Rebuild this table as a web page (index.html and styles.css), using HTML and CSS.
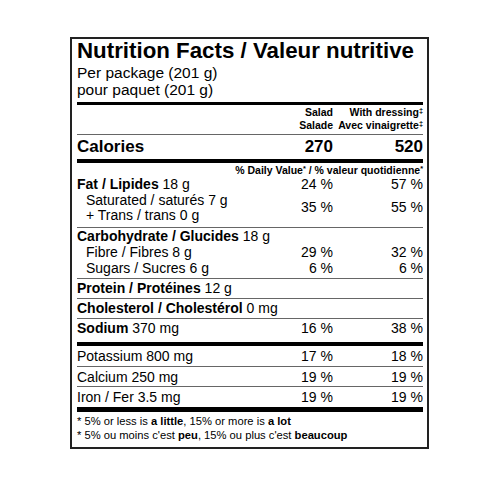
FILE: index.html
```html
<!DOCTYPE html>
<html lang="en">
<head>
    <meta charset="UTF-8">
    <meta name="viewport" content="width=device-width, initial-scale=1.0">
    <title>Nutrition Facts</title>

    <link rel="stylesheet" href="styles.css">
</head>
<body>
    <div class="facts">
        <h1 class="title">Nutrition Facts / Valeur nutritive</h1>
        <p class="serving">Per package (201 g)<br>pour paquet (201 g)</p>

        <div class="cols head">
            <span></span>
            <span class="num">Salad<br>Salade</span>
            <span class="num">With dressing<sup>‡</sup><br>Avec vinaigrette<sup>‡</sup></span>
        </div>

        <div class="cols calories">
            <span>Calories</span>
            <span class="num">270</span>
            <span class="num">520</span>
        </div>

        <p class="dv">% Daily Value<sup>*</sup> / % valeur quotidienne<sup>*</sup></p>

        <div class="group fat">
            <div class="cols">
                <span class="name"><b>Fat / Lipides</b> 18 g</span>
                <span class="num">24 %</span>
                <span class="num">57 %</span>
            </div>
            <div class="cols">
                <span class="name sub">Saturated / saturés 7 g<br>+ Trans / trans 0 g</span>
                <span class="num">35 %</span>
                <span class="num">55 %</span>
            </div>
        </div>

        <div class="group carbs">
            <div class="cols">
                <span class="name"><b>Carbohydrate / Glucides</b> 18 g</span>
                <span></span>
                <span></span>
            </div>
            <div class="cols">
                <span class="name sub">Fibre / Fibres 8 g</span>
                <span class="num">29 %</span>
                <span class="num">32 %</span>
            </div>
            <div class="cols">
                <span class="name sub">Sugars / Sucres 6 g</span>
                <span class="num">6 %</span>
                <span class="num">6 %</span>
            </div>
        </div>

        <div class="cols line">
            <span class="name"><b>Protein / Protéines</b> 12 g</span>
            <span></span>
            <span></span>
        </div>
        <div class="cols line">
            <span class="name"><b>Cholesterol / Cholestérol</b> 0 mg</span>
            <span></span>
            <span></span>
        </div>
        <div class="cols line sodium">
            <span class="name"><b>Sodium</b> 370 mg</span>
            <span class="num">16 %</span>
            <span class="num">38 %</span>
        </div>

        <div class="cols mineral">
            <span class="name">Potassium 800 mg</span>
            <span class="num">17 %</span>
            <span class="num">18 %</span>
        </div>
        <div class="cols mineral">
            <span class="name">Calcium 250 mg</span>
            <span class="num">19 %</span>
            <span class="num">19 %</span>
        </div>
        <div class="cols mineral last">
            <span class="name">Iron / Fer 3.5 mg</span>
            <span class="num">19 %</span>
            <span class="num">19 %</span>
        </div>

        <p class="foot">
            <span class="star">*</span> 5% or less is <b>a little</b>, 15% or more is <b>a lot</b><br>
            <span class="star">*</span> 5% ou moins c'est <b>peu</b>, 15% ou plus c'est <b>beaucoup</b>
        </p>
    </div>
</body>
</html>
```

FILE: styles.css
```css
* {
    box-sizing: border-box;
}
body {
    margin: 0;
    background-color: #fff;
    color: #000;
    font-family: "Liberation Sans", Arial, sans-serif;
}
p, h1 {
    margin: 0;
}
.facts {
    width: 359px;
    margin: 37px 0 0 70px;
    padding: 0 4px 0 5px;
    border: 2px solid #222;
}
.title {
    font-size: 22.3px;
    line-height: 23px;
    font-weight: bold;
    white-space: nowrap;
}
.serving {
    margin-top: 2px;
    padding-bottom: 4px;
    font-size: 15.5px;
    line-height: 17px;
    border-bottom: 3px solid #000;
}
.cols {
    display: grid;
    grid-template-columns: minmax(0, 1fr) 80px 90px;
    align-items: center;
    font-size: 14px;
    line-height: 16px;
}
.name {
    white-space: nowrap;
}
.num {
    text-align: right;
    white-space: nowrap;
}
.sub {
    padding-left: 9px;
}
sup {
    font-size: 0.7em;
    line-height: 0;
    vertical-align: 0.35em;
}
.head {
    padding: 1px 0 2px;
    font-size: 10.5px;
    line-height: 13px;
    font-weight: bold;
    border-bottom: 1px solid #666;
}
.calories {
    padding: 2px 0;
    font-size: 17px;
    line-height: 20px;
    font-weight: bold;
    border-bottom: 4px solid #000;
}
.dv {
    padding-top: 1px;
    text-align: right;
    font-size: 10.5px;
    line-height: 13px;
    font-weight: bold;
}
.group {
    border-bottom: 1px solid #666;
}
.fat {
    padding-bottom: 3.5px;
}
.fat .cols {
    line-height: 15.5px;
}
.carbs {
    padding-bottom: 2px;
}
.line {
    padding: 1px 0 2px;
    border-bottom: 1px solid #666;
}
.sodium {
    padding-bottom: 6px;
    border-bottom: 4px solid #000;
}
.mineral {
    padding: 2px 0 1.5px;
    border-bottom: 1px solid #666;
}
.mineral.last {
    border-bottom: 5px solid #000;
}
.foot {
    padding: 2px 0 5.5px;
    font-size: 11.2px;
    line-height: 14px;
}
```
